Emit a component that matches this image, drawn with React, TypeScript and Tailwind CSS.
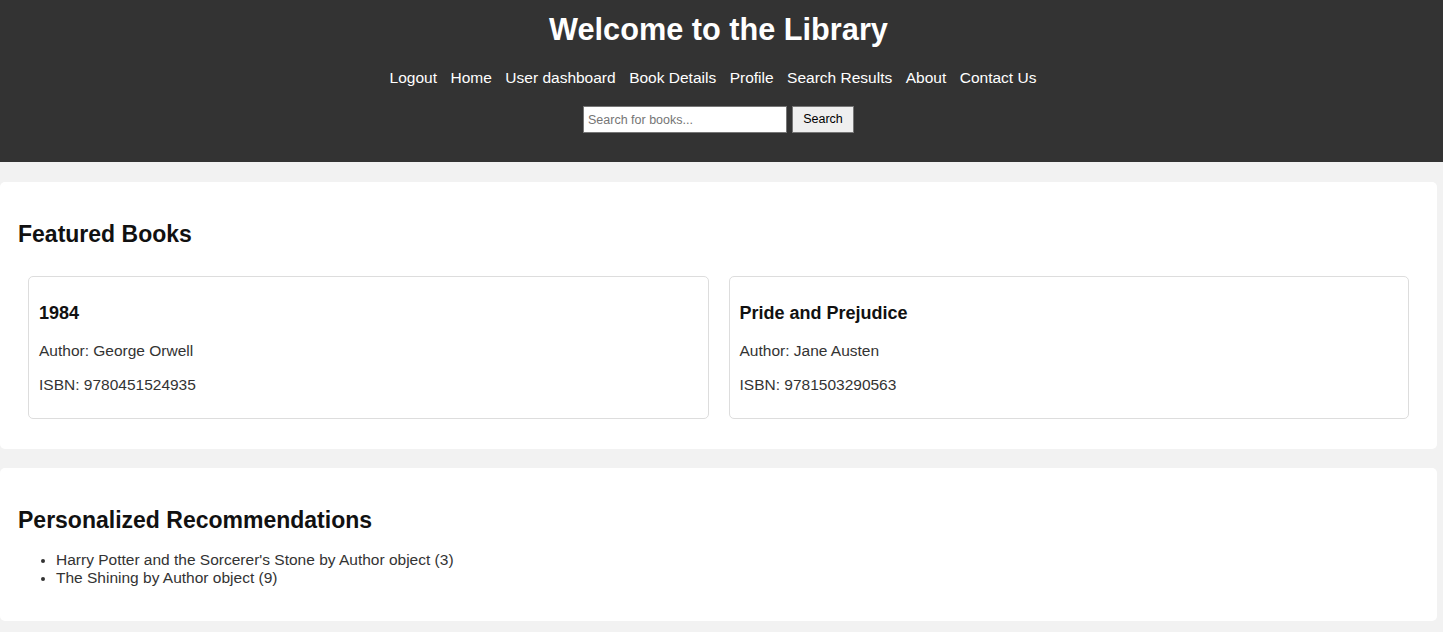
const navLinks = [
  "Logout",
  "Home",
  "User dashboard",
  "Book Details",
  "Profile",
  "Search Results",
  "About",
  "Contact Us",
];

const books = [
  { title: "1984", author: "George Orwell", isbn: "9780451524935" },
  { title: "Pride and Prejudice", author: "Jane Austen", isbn: "9781503290563" },
];

const recommendations = [
  "Harry Potter and the Sorcerer's Stone by Author object (3)",
  "The Shining by Author object (9)",
];

export default function App() {
  return (
    <div className="min-h-[632px] bg-[#f2f2f2] font-['Liberation_Sans',Arial,sans-serif] text-[15.5px] text-[#333]">
      <header className="h-[162px] bg-[#333] text-white">
        <div className="mr-[6px] pt-[12px] text-center">
          <h1 className="text-[30.7px] font-bold leading-[35px]">
            Welcome to the Library
          </h1>

          <nav className="mt-[22px] flex justify-center gap-[13.5px] pr-[11px] leading-[18px]">
            {navLinks.map((link) => (
              <a key={link} href="#" className="text-white">
                {link}
              </a>
            ))}
          </nav>

          <form className="mt-[19px] flex justify-center gap-[5px]">
            <input
              type="text"
              placeholder="Search for books..."
              className="h-[27px] w-[204px] border border-[#767676] bg-white px-[4px] text-[12.5px] text-black placeholder:text-[#757575]"
            />
            <button
              type="button"
              className="h-[27px] w-[62px] border border-[#767676] bg-[#efefef] text-[12.5px] text-black"
            >
              Search
            </button>
          </form>
        </div>
      </header>

      <main className="pt-[20px] pb-[10px]">
        <section className="mr-[6px] rounded-[5px] bg-white px-[18px] pt-[39px] pb-[30px]">
          <h2 className="text-[23px] font-bold leading-[26px] text-[#111]">
            Featured Books
          </h2>

          <div className="mt-[29px] grid grid-cols-2 gap-[20px] px-[10px]">
            {books.map((book) => (
              <div
                key={book.isbn}
                className="rounded-[5px] border border-[#ddd] px-[10px] pt-[26px] pb-[24px]"
              >
                <h3 className="text-[18px] font-bold leading-[21px] text-[#111]">
                  {book.title}
                </h3>
                <p className="mt-[18px] leading-[18px]">Author: {book.author}</p>
                <p className="mt-[16px] leading-[18px]">ISBN: {book.isbn}</p>
              </div>
            ))}
          </div>
        </section>

        <section className="mt-[19px] mr-[6px] rounded-[5px] bg-white px-[18px] pt-[39px] pb-[35px]">
          <h2 className="text-[23px] font-bold leading-[26px] text-[#111]">
            Personalized Recommendations
          </h2>

          <ul className="mt-[18px] list-disc pl-[38px] leading-[17.7px] marker:text-[13px]">
            {recommendations.map((rec) => (
              <li key={rec}>{rec}</li>
            ))}
          </ul>
        </section>
      </main>
    </div>
  );
}
